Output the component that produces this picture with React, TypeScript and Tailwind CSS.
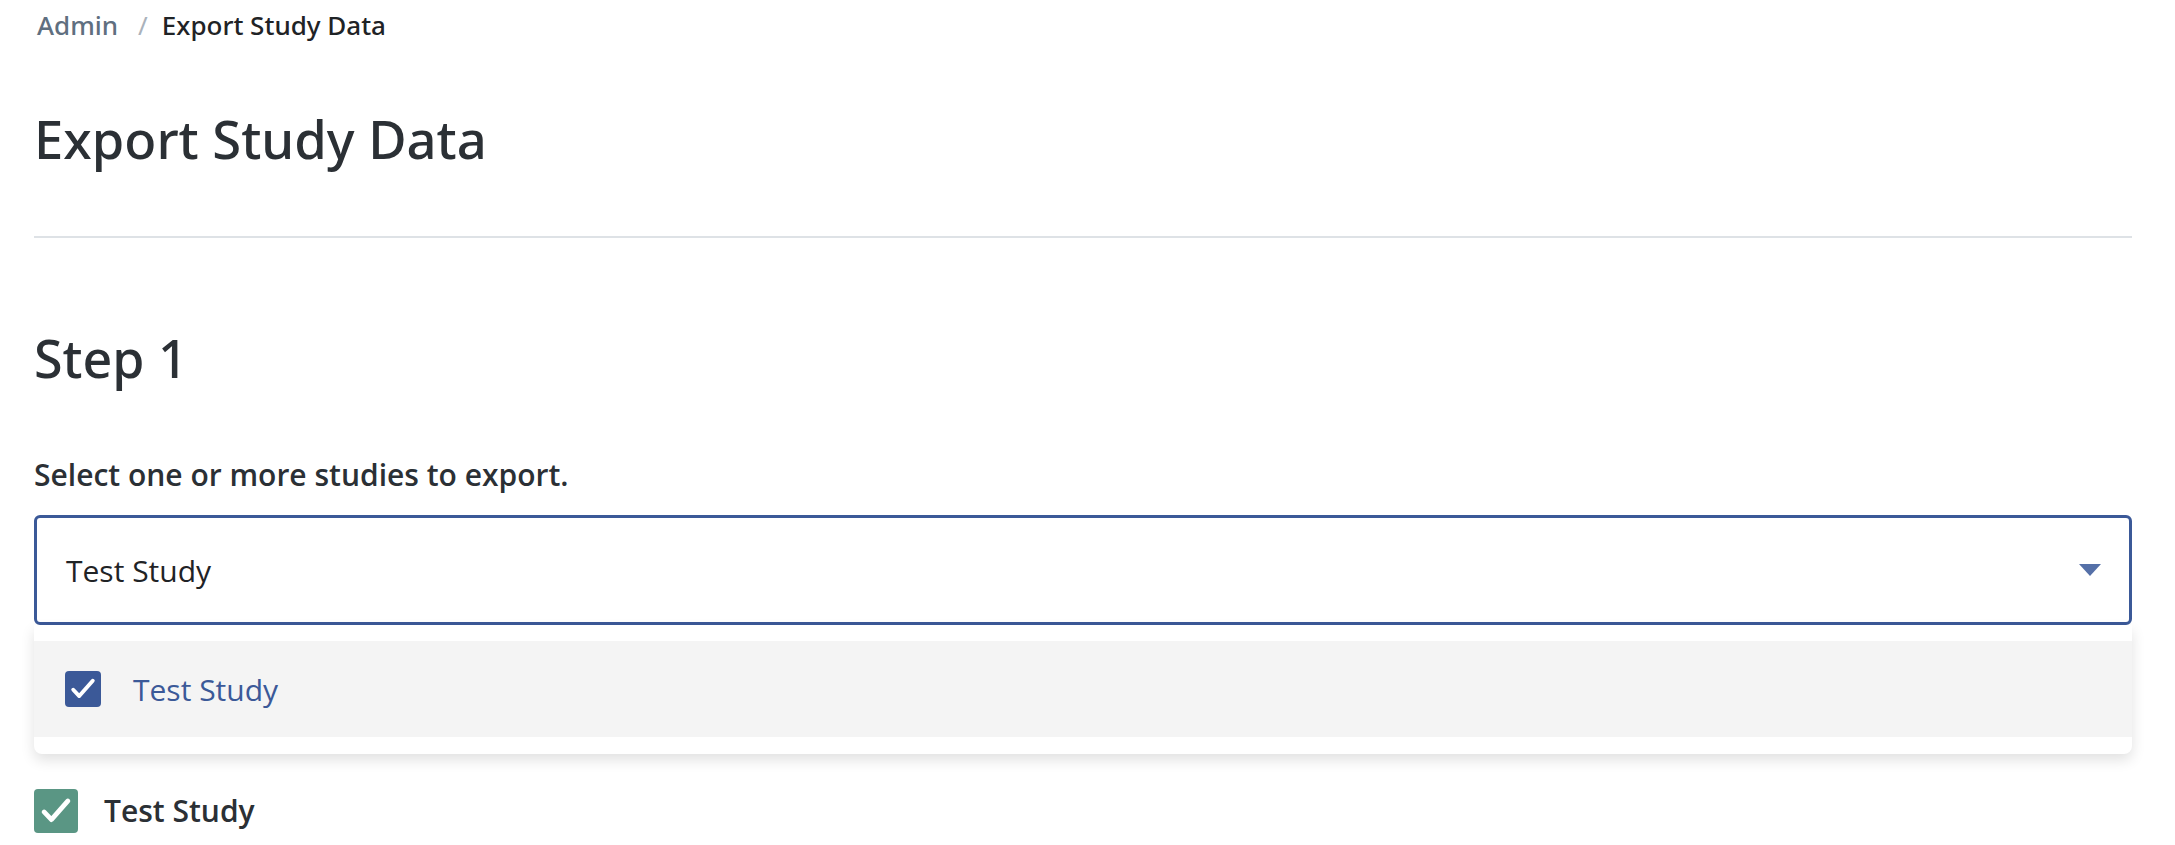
import React from "react";

const font = { fontFamily: '"Open Sans", "Noto Sans", sans-serif' };
const headFont = { fontFamily: '"Noto Sans", "Open Sans", sans-serif' };

function Check({ className }: { className?: string }) {
  return (
    <svg viewBox="0 0 24 24" className={className} fill="none" stroke="white" strokeWidth="2.6" strokeLinecap="round" strokeLinejoin="round">
      <path d="M5.5 12.5l4 4.2L18.5 6.5" />
    </svg>
  );
}

export default function App() {
  return (
    <div className="min-h-screen bg-white pl-[34px] pr-[43px] text-[#2b3035]" style={font}>
      <nav className="flex h-[50px] items-center text-[26px] font-medium" style={headFont}>
        <span className="ml-[3px] text-[#5f6f80]">Admin</span>
        <span className="ml-[20px] mr-[14px] text-[#aab2bb] font-normal">/</span>
        <span className="text-[#1f2326]">Export Study Data</span>
      </nav>
      <h1 className="mt-[57px] text-[52.5px] leading-[1.2] font-medium text-[#2b3035]" style={headFont}>Export Study Data</h1>
      <div className="mt-[66px] h-[2px] bg-[#dee2e6]" />
      <h2 className="mt-[89px] text-[52px] leading-[1.2] font-medium text-[#2b3035]" style={headFont}>Step 1</h2>
      <div className="mt-[66px] text-[30px] leading-[40px] font-semibold text-[#2b3035]">Select one or more studies to export.</div>
      <div className="relative mt-[20px]">
        <div className="flex h-[110px] items-center justify-between rounded-[6px] border-[3px] border-[#3b5998] pl-[29px] pr-[28px]">
          <span className="text-[30px] text-[#1f2326]">Test Study</span>
          <svg width="22" height="12" viewBox="0 0 22 12">
            <path d="M0 0h22L11 12z" fill="#5570a8" />
          </svg>
        </div>
        <div className="absolute left-0 right-0 top-full z-10 rounded-b-[8px] bg-white pt-[16px] pb-[17px] shadow-[0_6px_14px_rgba(0,0,0,0.12)]">
          <div className="flex h-[96px] items-center bg-[#f4f4f4] pl-[31px]">
            <div className="flex h-[36px] w-[36px] items-center justify-center rounded-[4px] bg-[#3b5998]">
              <Check className="h-[36px] w-[36px]" />
            </div>
            <span className="ml-[32px] text-[30px] text-[#3b5998]">Test Study</span>
          </div>
        </div>
      </div>
      <div className="mt-[163px] flex items-center">
        <div className="flex h-[44px] w-[44px] items-center justify-center rounded-[4px] bg-[#5a9684]">
          <Check className="h-[44px] w-[44px]" />
        </div>
        <span className="ml-[26px] text-[30px] font-semibold text-[#2b3035]">Test Study</span>
      </div>
    </div>
  );
}
